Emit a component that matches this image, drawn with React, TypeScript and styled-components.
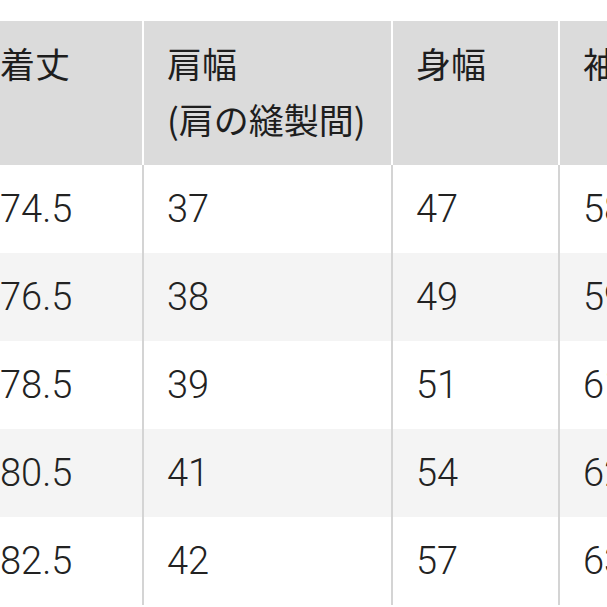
import React from 'react'
import styled, { createGlobalStyle } from 'styled-components'

const GlobalStyle = createGlobalStyle`
  html, body {
    margin: 0;
    padding: 0;
    background: #fff;
  }
`

const columns: { title: string; sub?: string; width: number }[] = [
  { title: '着丈', width: 166 },
  { title: '肩幅', sub: '(肩の縫製間)', width: 249 },
  { title: '身幅', width: 167 },
  { title: '袖丈', width: 200 },
]

const rows = [
  ['74.5', '37', '47', '58'],
  ['76.5', '38', '49', '59'],
  ['78.5', '39', '51', '61'],
  ['80.5', '41', '54', '62'],
  ['82.5', '42', '57', '63'],
]

const Page = styled.div`
  width: 607px;
  height: 607px;
  overflow: hidden;
  padding-top: 21px;
  box-sizing: border-box;
`

const Table = styled.table`
  margin-left: -23px;
  border-collapse: collapse;
  table-layout: fixed;
  width: 782px;
`

const HeadCell = styled.th`
  height: 144px;
  box-sizing: border-box;
  padding: 14px 23px 0;
  vertical-align: top;
  text-align: left;
  background: #dbdbdb;
  color: #1e1e1e;
  font-family: 'Noto Sans CJK JP', 'Noto Sans', sans-serif;
  font-weight: 400;
  font-size: 35px;
  line-height: 56px;
  border-left: 2px solid #fff;

  &:first-child {
    border-left: none;
  }
`

const Row = styled.tr<{ $striped: boolean }>`
  background: ${p => (p.$striped ? '#f4f4f4' : '#fff')};
`

const Cell = styled.td`
  height: 88px;
  box-sizing: border-box;
  padding: 0 23px;
  vertical-align: middle;
  color: #222;
  font-family: Roboto, 'Liberation Sans', sans-serif;
  font-weight: 300;
  font-size: 38px;
  border-left: 2px solid #d4d4d4;

  &:first-child {
    border-left: none;
  }
`

export default function App() {
  return (
    <>
      <GlobalStyle />
      <Page>
        <Table>
          <colgroup>
            {columns.map(c => (
              <col key={c.title} style={{ width: c.width }} />
            ))}
          </colgroup>
          <thead>
            <tr>
              {columns.map(c => (
                <HeadCell key={c.title}>
                  {c.title}
                  {c.sub && (
                    <>
                      <br />
                      {c.sub}
                    </>
                  )}
                </HeadCell>
              ))}
            </tr>
          </thead>
          <tbody>
            {rows.map((r, i) => (
              <Row key={r[0]} $striped={i % 2 === 1}>
                {r.map((v, j) => (
                  <Cell key={j}>{v}</Cell>
                ))}
              </Row>
            ))}
          </tbody>
        </Table>
      </Page>
    </>
  )
}
